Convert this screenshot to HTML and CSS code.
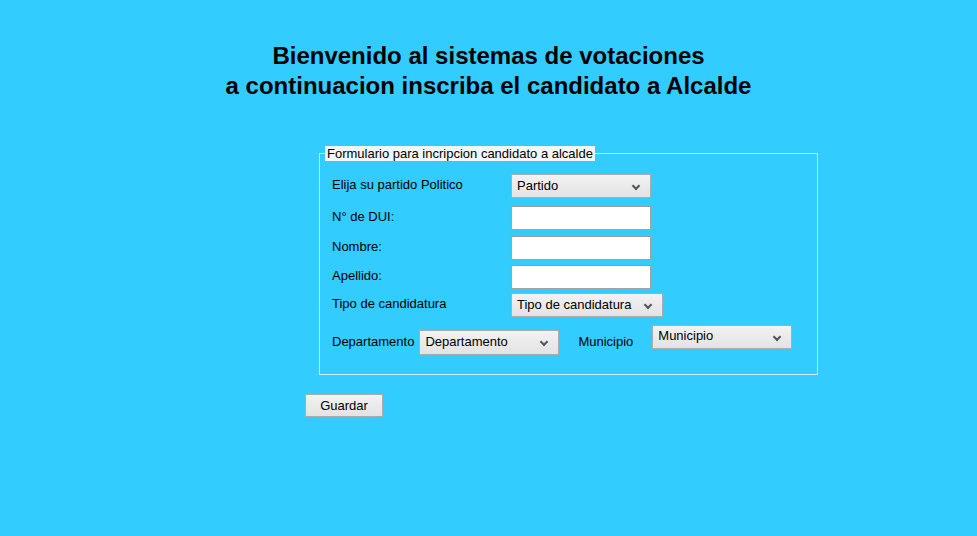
FILE: index.html
```html
<!DOCTYPE html>
<html>
<head>
<meta charset="utf-8">
<link rel="stylesheet" href="styles.css">
</head>
<body>
<h1 class="title">Bienvenido al sistemas de votaciones<br>a continuacion inscriba el candidato a Alcalde</h1>
<form class="form">
  <fieldset class="box">
    <legend class="legend">Formulario para incripcion candidato a alcalde</legend>
    <div class="row r1">
      <label class="lbl">Elija su partido Politico</label>
      <div class="sel">Partido</div>
    </div>
    <div class="row r2">
      <label class="lbl">N° de DUI:</label>
      <div class="inp"></div>
    </div>
    <div class="row r3">
      <label class="lbl">Nombre:</label>
      <div class="inp"></div>
    </div>
    <div class="row r4">
      <label class="lbl">Apellido:</label>
      <div class="inp"></div>
    </div>
    <div class="row r5">
      <label class="lbl">Tipo de candidatura</label>
      <div class="sel wide">Tipo de candidatura</div>
    </div>
    <div class="row r6">
      <label class="lbl2">Departamento</label>
      <div class="sel dep">Departamento</div>
      <label class="lbl3">Municipio</label>
      <div class="sel mun">Municipio</div>
    </div>
  </fieldset>
  <div class="btn">Guardar</div>
</form>
</body>
</html>
```
FILE: styles.css
```css
html, body {
  margin: 0;
  padding: 0;
  background: #33ccff;
  font-family: "Liberation Sans", Arial, sans-serif;
  color: #000;
}
body {
  width: 977px;
  height: 536px;
  overflow: hidden;
}
.title {
  margin: 41px 0 0 0;
  text-align: center;
  font-size: 24px;
  line-height: 30px;
  font-weight: bold;
}
.form {
  margin: 45px 0 0 305px;
}
.box {
  margin: 0 0 0 14px;
  box-sizing: border-box;
  width: 499px;
  border: 1px solid #c8eefc;
  padding: 13px 12px 19px 12px;
}
.legend {
  background: #f2f6f8;
  font-size: 13px;
  line-height: 15px;
  padding: 0 2px;
  margin-left: -7px;
}
.row {
  display: flex;
  align-items: flex-start;
  font-size: 13px;
}
.lbl {
  width: 179px;
  padding-top: 3px;
  line-height: 15px;
}
.sel {
  box-sizing: border-box;
  width: 140px;
  height: 24px;
  border: 1px solid #acacac;
  background: linear-gradient(#f2f2f2, #e3e3e3);
  font-size: 13px;
  line-height: 22px;
  padding-left: 5px;
  position: relative;
}
.sel::after {
  content: "";
  position: absolute;
  right: 11px;
  top: 8px;
  width: 4px;
  height: 4px;
  border-right: 2px solid #555;
  border-bottom: 2px solid #555;
  transform: rotate(45deg);
}
.sel.wide { width: 152px; }
.inp {
  box-sizing: border-box;
  width: 140px;
  height: 24px;
  background: #fff;
  border: 1px solid #a3a3a3;
  border-top-color: #9a9a9a;
}
.r2 { margin-top: 8px; }
.r3 { margin-top: 6px; }
.r4 { margin-top: 5px; }
.r5 { margin-top: 4px; }
.r6 { margin-top: 8px; }
.lbl2 {
  padding-top: 9px;
  line-height: 15px;
  margin-right: 5px;
}
.dep { margin-top: 5px; height: 25px; }
.lbl3 {
  padding-top: 9px;
  line-height: 15px;
  margin-left: 19px;
  margin-right: 19px;
}
.mun { line-height: 20px; }
.btn {
  margin-top: 19px;
  box-sizing: border-box;
  width: 78px;
  height: 23px;
  border: 1px solid #acacac;
  background: linear-gradient(#f2f2f2, #e3e3e3);
  font-size: 13px;
  line-height: 21px;
  text-align: center;
}
```
